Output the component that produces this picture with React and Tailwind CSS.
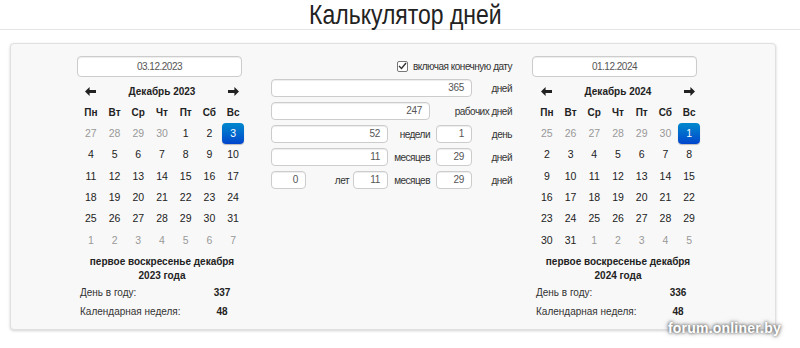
import React from "react";

const left = {
  title: "Декабрь 2023",
  date: "03.12.2023",
  weeks: [
    [[27, 1], [28, 1], [29, 1], [30, 1], [1], [2], [3, 0, 1]],
    [[4], [5], [6], [7], [8], [9], [10]],
    [[11], [12], [13], [14], [15], [16], [17]],
    [[18], [19], [20], [21], [22], [23], [24]],
    [[25], [26], [27], [28], [29], [30], [31]],
    [[1, 1], [2, 1], [3, 1], [4, 1], [5, 1], [6, 1], [7, 1]],
  ],
  note: "2023 года",
  dayOfYear: 337,
  week: 48,
};

const right = {
  title: "Декабрь 2024",
  date: "01.12.2024",
  weeks: [
    [[25, 1], [26, 1], [27, 1], [28, 1], [29, 1], [30, 1], [1, 0, 1]],
    [[2], [3], [4], [5], [6], [7], [8]],
    [[9], [10], [11], [12], [13], [14], [15]],
    [[16], [17], [18], [19], [20], [21], [22]],
    [[23], [24], [25], [26], [27], [28], [29]],
    [[30], [31], [1, 1], [2, 1], [3, 1], [4, 1], [5, 1]],
  ],
  note: "2024 года",
  dayOfYear: 336,
  week: 48,
};

const dayNames = ["Пн", "Вт", "Ср", "Чт", "Пт", "Сб", "Вс"];

function Arrow({ flip }) {
  return (
    <svg width="11" height="9" viewBox="0 0 11 9" className={flip ? "rotate-180" : ""}>
      <path d="M0 4.5 L4.6 0 L4.6 3 L11 3 L11 6 L4.6 6 L4.6 9 Z" fill="#222" />
    </svg>
  );
}

function Field({ value, className = "" }) {
  return (
    <div
      className={`h-[18px] bg-white border border-[#cccccc] rounded-[4px] shadow-[inset_0_1px_1px_rgba(0,0,0,0.075)] text-right pr-[7px] leading-[16px] text-[#555] tracking-[-0.3px] ${className}`}
    >
      {value}
    </div>
  );
}

function DateColumn({ data, calOffset }) {
  return (
    <div className="w-[165px]">
      <div className="h-[21px] bg-white border border-[#cccccc] rounded-[4px] shadow-[inset_0_1px_1px_rgba(0,0,0,0.075)] text-center leading-[19px] text-[#555] text-[10px] tracking-[-0.5px]">
        {data.date}
      </div>
      <div className={`w-[166px] mt-[3px] text-[10px] ${calOffset}`}>
        <div className="grid grid-cols-7 h-[22px] items-center">
          <div className="flex justify-center">
            <Arrow />
          </div>
          <div className="col-span-5 text-center font-bold text-[#222]">{data.title}</div>
          <div className="flex justify-center">
            <Arrow flip />
          </div>
        </div>
        <div className="grid grid-cols-7 h-[21px] items-center font-bold text-[#222]">
          {dayNames.map((d) => (
            <div key={d} className="text-center">
              {d}
            </div>
          ))}
        </div>
        {data.weeks.map((w, i) => (
          <div key={i} className="grid grid-cols-7 h-[21.4px] items-center text-[10.5px]">
            {w.map(([d, muted, sel], j) => (
              <div key={j} className="flex justify-center">
                {sel ? (
                  <div className="w-[22px] h-[21px] rounded-[4px] bg-linear-to-b from-[#0088cc] to-[#0044cc] text-white flex items-center justify-center shadow-[0_1px_1px_rgba(0,0,0,0.25)]">
                    {d}
                  </div>
                ) : (
                  <span className={muted ? "text-[#999]" : "text-[#222]"}>{d}</span>
                )}
              </div>
            ))}
          </div>
        ))}
        <div className="mt-[4px] text-center font-bold leading-[14px] text-[#222] whitespace-nowrap">
          <div>первое воскресенье декабря</div>
          <div>{data.note}</div>
        </div>
        <div className="flex h-[19px] items-center">
          <span className="w-[126px] pl-[1px] text-[#333]">День в году:</span>
          <span className="w-[34px] text-center font-bold text-[#222]">{data.dayOfYear}</span>
        </div>
        <div className="flex h-[19px] items-center">
          <span className="w-[126px] pl-[1px] text-[#333]">Календарная неделя:</span>
          <span className="w-[34px] text-center font-bold text-[#222]">{data.week}</span>
        </div>
      </div>
    </div>
  );
}

function Label({ children, className = "" }) {
  return <span className={`text-right text-[#333] whitespace-nowrap ${className}`}>{children}</span>;
}

export default function App() {
  return (
    <div className="relative w-[800px] h-[348px] bg-white font-[family-name:Liberation_Sans,Arial,sans-serif] text-[12px] overflow-hidden">
      <div className="h-[30px] border-b border-[#e5e5e5] flex justify-center items-center">
        <h1 className="text-[28px] leading-[30px] text-[#222] ml-[10px] scale-x-[0.82] whitespace-nowrap">
          Калькулятор дней
        </h1>
      </div>
      <div className="mt-[13px] ml-[10px] w-[766px] h-[287px] bg-[#f8f8f8] border border-[#e0e0e0] rounded-[4px] shadow-[0_1px_3px_rgba(0,0,0,0.18)] flex pt-[12px] pl-[66px]">
        <DateColumn data={left} calOffset="ml-[2px]" />
        <div className="w-[241px] ml-[29px] text-[10px] tracking-[-0.5px]">
          <div className="h-[20px] flex items-center justify-end gap-[5px] text-[#333]">
            <span className="w-[11px] h-[11px] border border-[#777] rounded-[2px] bg-white flex items-center justify-center">
              <svg width="9" height="8" viewBox="0 0 9 8">
                <path d="M1 4 L3.5 6.5 L8 1" stroke="#333" strokeWidth="1.4" fill="none" />
              </svg>
            </span>
            <span>включая конечную дату</span>
          </div>
          <div className="mt-[3px] flex flex-col gap-[5px]">
            <div className="flex items-center">
              <Field value="365" className="w-[201px]" />
              <Label className="flex-1">дней</Label>
            </div>
            <div className="flex items-center">
              <Field value="247" className="w-[159px]" />
              <Label className="flex-1">рабочих дней</Label>
            </div>
            <div className="flex items-center">
              <Field value="52" className="w-[117px]" />
              <Label className="w-[42px]">недели</Label>
              <Field value="1" className="w-[36px] ml-[6px]" />
              <Label className="flex-1">день</Label>
            </div>
            <div className="flex items-center">
              <Field value="11" className="w-[117px]" />
              <Label className="w-[42px]">месяцев</Label>
              <Field value="29" className="w-[36px] ml-[6px]" />
              <Label className="flex-1">дней</Label>
            </div>
            <div className="flex items-center">
              <Field value="0" className="w-[35px]" />
              <Label className="w-[43px]">лет</Label>
              <Field value="11" className="w-[35px] ml-[4px]" />
              <Label className="w-[42px]">месяцев</Label>
              <Field value="29" className="w-[36px] ml-[6px]" />
              <Label className="flex-1">дней</Label>
            </div>
          </div>
        </div>
        <div className="ml-[20px]">
          <DateColumn data={right} calOffset="ml-[3px]" />
        </div>
      </div>
      <div className="absolute left-[668px] top-[318px] text-[14px] font-bold text-white [text-shadow:0_0_3px_#555,0_0_5px_#777] tracking-[0.2px]">
        forum.onliner.by
      </div>
    </div>
  );
}
